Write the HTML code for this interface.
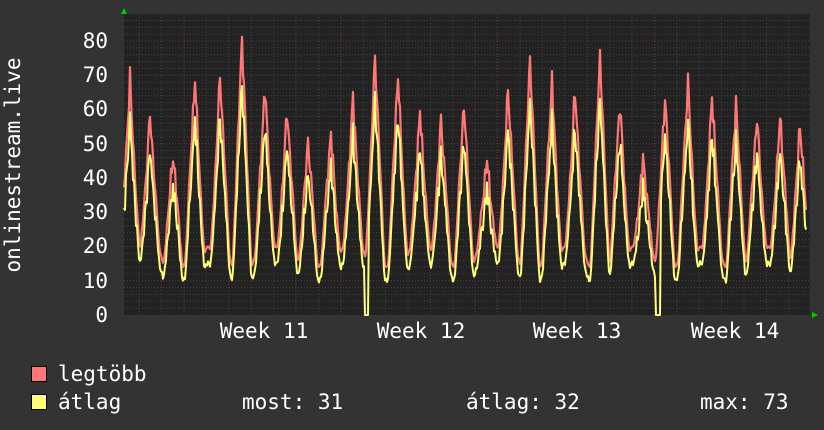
<!DOCTYPE html>
<html><head><meta charset="utf-8"><style>
html,body{margin:0;padding:0;background:#333;width:824px;height:430px;overflow:hidden}
svg{display:block}
text{font-family:"DejaVu Sans Mono","Liberation Mono",monospace;fill:#fff;font-size:21px}
</style></head><body>
<svg id="g" width="824" height="430" xmlns="http://www.w3.org/2000/svg">
<rect width="824" height="430" fill="#333"/>
<rect x="124" y="14" width="686" height="301" fill="#222"/>
<g id="grid"></g>
<polyline id="red" fill="none" stroke="#ff7777" stroke-width="2.2" stroke-linejoin="round"/>
<polyline id="yel" fill="none" stroke="#ffff77" stroke-width="2" stroke-linejoin="round"/>
<polygon points="121,14 127,14 124,8" fill="#0c0"/>
<polygon points="812,312 812,318 818,315" fill="#0c0"/>
<g text-anchor="end">
<text x="108" y="322">0</text><text x="108" y="288">10</text><text x="108" y="253">20</text>
<text x="108" y="219">30</text><text x="108" y="185">40</text><text x="108" y="151">50</text>
<text x="108" y="116">60</text><text x="108" y="82">70</text><text x="108" y="48">80</text>
</g>
<g text-anchor="middle">
<text x="264" y="338">Week 11</text><text x="421" y="338">Week 12</text>
<text x="577" y="338">Week 13</text><text x="735" y="338">Week 14</text>
</g>
<text transform="translate(20,165) rotate(-90)" text-anchor="middle">onlinestream.live</text>
<rect x="31.5" y="366.5" width="15" height="15" fill="#ff7777" stroke="#000"/>
<rect x="31.5" y="394.5" width="15" height="15" fill="#ffff77" stroke="#000"/>
<text x="58" y="381">legtöbb</text>
<text x="58" y="409">átlag</text>
<text x="242" y="409">most: 31</text>
<text x="466" y="409">átlag: 32</text>
<text x="700" y="409">max: 73</text>
</svg>
<script>
var g=document.getElementById("grid"),h="";
for(var v=2;v<=86;v+=2){var y=315-v*3.425;if(y<14)break;h+='<line x1="124" x2="810" y1="'+y+'" y2="'+y+'" stroke="'+(v%10==0?'#6a3a3a':'#444')+'" stroke-dasharray="1,2"/>';}
for(var i=0;i<32;i++){var x=184+(i-3)*22.4;if(x<125||x>809)continue;var maj=((i-3)%7==0);h+='<line x1="'+x+'" x2="'+x+'" y1="14" y2="315" stroke="'+(maj?'#6a3a3a':'#444')+'" stroke-dasharray="1,2"/>';}
g.innerHTML=h;
var pk=[[130,69],[150,59],[173,46],[195,69],[220,70],[242,80],[265,67],[287,60],[308,50],[331,53],[353,64],[375,75],[398,70],[420,60],[441,57],[464,61],[487,46],[508,66],[530,74],[552,68],[575,66],[600,75],[620,62],[643,46],[665,63],[688,68],[712,64],[736,61],[757,58],[780,58],[800,55]];
function val(x){var best=pk[0];for(var k=0;k<pk.length;k++)if(Math.abs(pk[k][0]-x)<Math.abs(best[0]-x))best=pk[k];
var d=Math.abs(x-best[0]);var t=Math.max(0,1-d/9.5);var s=Math.pow(t,1.05);
var tr=17+3*Math.sin(x*0.37);var n=2.5*Math.sin(x*1.7)+1.5*Math.sin(x*3.1);
return Math.max(0,tr+(best[1]-tr)*s+n*s);}
var r=[],yl=[];
for(var x=124;x<=806;x+=1){var v=val(x);var a=v*0.86-2+2*Math.sin(x*2.3)*(v>30?1:0.3);
if(x>=365&&x<=368){a=0;}if(x>=656&&x<=660){a=0;}
r.push(x+","+(315-v*3.425).toFixed(1));yl.push(x+","+(315-Math.max(0,a)*3.425).toFixed(1));}
document.getElementById("red").setAttribute("points",r.join(" "));
document.getElementById("yel").setAttribute("points",yl.join(" "));
</script>
</body></html>
